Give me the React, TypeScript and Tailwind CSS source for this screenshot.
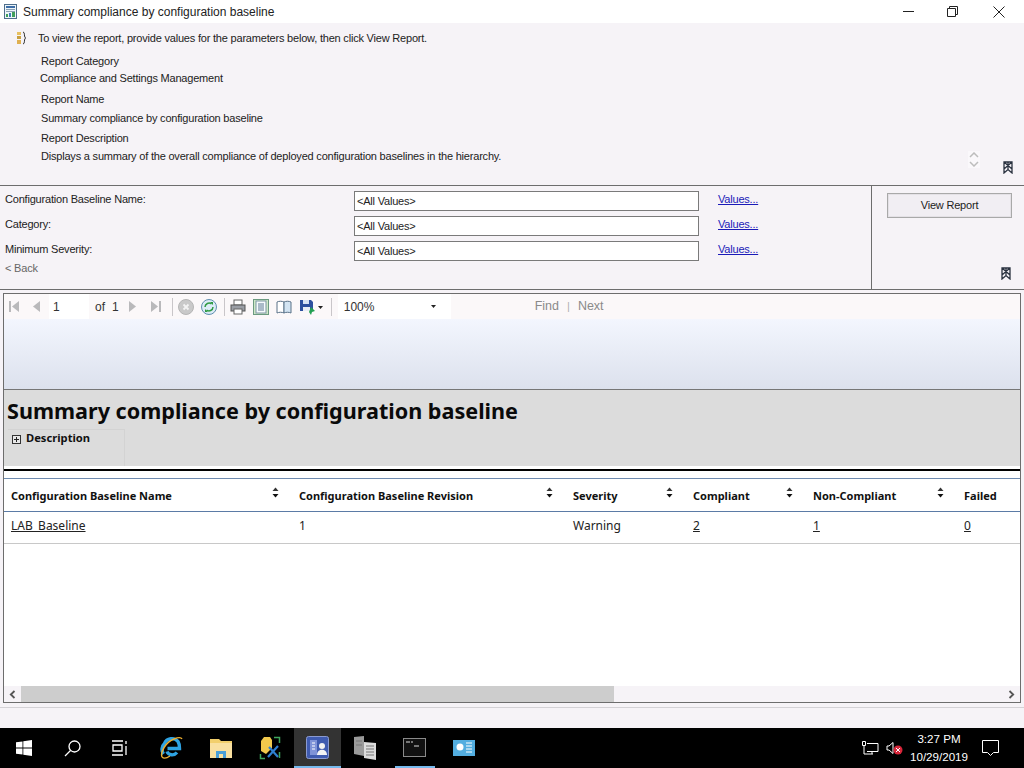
import type { ReactNode } from "react";

const INFO_ROWS = [
  { text: "Report Category", height: "h-[16px]", indent: "pl-[41px]" },
  { text: "Compliance and Settings Management", height: "h-[18px]", indent: "pl-[40px]" },
  { text: "Report Name", height: "h-[24px]", indent: "pl-[41px]" },
  { text: "Summary compliance by configuration baseline", height: "h-[14px]", indent: "pl-[41px]" },
  { text: "Report Description", height: "h-[26px]", indent: "pl-[41px]" },
  {
    text: "Displays a summary of the overall compliance of deployed configuration baselines in the hierarchy.",
    height: "h-[10px]",
    indent: "pl-[41px]",
  },
];

const PARAMS = ["Configuration Baseline Name:", "Category:", "Minimum Severity:"];

function PinIcon() {
  return (
    <svg width="12" height="13" viewBox="0 0 12 13" fill="none" stroke="#2a3240" strokeWidth="1.300">
      <path d="M2 1h8v11L6 8.500 2 12zM2 1l8 7M10 1 2 8M6 1v7.500" />
    </svg>
  );
}

function SortIcon() {
  return (
    <svg width="7" height="11" viewBox="0 0 7 11" className="mb-[9px] shrink-0">
      <path d="M3.500 0.500 6.500 4h-6z" fill="#333" />
      <path d="M0.500 7h6l-3 3.500z" fill="#111" />
    </svg>
  );
}

function NavIcon({ d }: { d: string }) {
  return (
    <svg width="12" height="13" viewBox="0 0 12 13" fill="#b9b9bb">
      <path d={d} />
    </svg>
  );
}

function ToolbarSep() {
  return <div className="h-[18px] w-px bg-[#c9c6c9]" />;
}

function HeaderCell({ children, sort = true }: { children: ReactNode; sort?: boolean }) {
  return (
    <div className="flex items-center justify-between pl-[7px] pr-[13px] pt-[3px] text-[11px] font-bold text-[#111]">
      <span className="whitespace-nowrap">{children}</span>
      {sort && <SortIcon />}
    </div>
  );
}

function TitleIcon() {
  return (
    <svg width="13" height="15" viewBox="0 0 13 15">
      <rect x="0.500" y="0.500" width="12" height="14" fill="#eef5f8" stroke="#4f6f8c" />
      <rect x="2" y="2" width="9" height="2" fill="#3d6ea8" />
      <path d="M2 5.500h9M2 7.500h9" stroke="#8aa0b5" />
      <rect x="2" y="10" width="2" height="3" fill="#3f9f5a" />
      <rect x="5" y="9" width="2" height="4" fill="#3d7fb8" />
      <rect x="8" y="8" width="3" height="5" fill="#3f9f5a" />
    </svg>
  );
}

function TaskbarSlot({
  children,
  width = "w-[49px]",
  active,
  marked,
}: {
  children: ReactNode;
  width?: string;
  active?: boolean;
  marked?: boolean;
}) {
  return (
    <div className={`flex h-[40px] flex-col items-center ${width} ${active ? "bg-[#333333]" : ""}`}>
      <div className="flex flex-1 items-center justify-center">{children}</div>
      {active && <div className="h-[2px] w-full bg-[#76b9ed]" />}
      {marked && <div className="h-[2px] w-[40px] bg-[#76b9ed]" />}
    </div>
  );
}

export default function App() {
  return (
    <div className="flex h-[768px] w-[1024px] flex-col overflow-hidden bg-[#f6f3f7] font-['Liberation_Sans',sans-serif] text-[12px] text-[#222]">
      {/* Title bar */}
      <div className="flex h-[23px] shrink-0 items-center bg-white">
        <div className="ml-[4px] mr-[6px] flex">
          <TitleIcon />
        </div>
        <span className="text-[12px] text-[#222]">Summary compliance by configuration baseline</span>
        <div className="ml-auto flex items-center">
          <svg width="12" height="12" viewBox="0 0 12 12" className="mr-[33px]" stroke="#222" fill="none">
            <path d="M1 5.500h11" />
          </svg>
          <svg width="11" height="11" viewBox="0 0 11 11" className="mr-[35px]" stroke="#222" fill="none">
            <path d="M0.500 2.500h8v8h-8zM2.500 2.500v-2h8v8h-2" />
          </svg>
          <svg width="12" height="12" viewBox="0 0 12 12" className="mr-[19px]" stroke="#222" fill="none">
            <path d="M0.500 0.500l11 11M11.500 0.500l-11 11" />
          </svg>
        </div>
      </div>

      {/* Report info */}
      <div className="relative h-[163px] shrink-0 border-b border-[#6d6d6d] text-[11px] leading-none tracking-[-0.2px]">
        <div className="flex h-[30px] items-center">
          <svg width="12" height="14" viewBox="0 0 12 14" className="ml-[16px] mr-[10px]">
            <rect x="1" y="1" width="4" height="3" fill="#e8c060" />
            <rect x="1" y="5" width="4" height="3" fill="#c9a040" />
            <rect x="1" y="9" width="4" height="4" fill="#e0b050" />
            <path d="M7 1c2 0 1 4 2 5.500 1 0.500 1 0.500 0 1C8 9 9 13 7 13" fill="none" stroke="#333" />
          </svg>
          <span>To view the report, provide values for the parameters below, then click View Report.</span>
        </div>
        {INFO_ROWS.map((row) => (
          <div key={row.text} className={`flex items-center whitespace-nowrap ${row.height} ${row.indent}`}>
            {row.text}
          </div>
        ))}
        <div className="absolute left-[968px] top-[128px] flex flex-col gap-[3px] bg-[#faf8fb] px-[1px] py-[1px]">
          <svg width="10" height="6" viewBox="0 0 10 6" fill="none" stroke="#bdbdbd" strokeWidth="1.500">
            <path d="M1 5l4-4 4 4" />
          </svg>
          <svg width="10" height="6" viewBox="0 0 10 6" fill="none" stroke="#bdbdbd" strokeWidth="1.500">
            <path d="M1 1l4 4 4-4" />
          </svg>
        </div>
        <div className="absolute left-[1002px] top-[138px]">
          <PinIcon />
        </div>
      </div>

      {/* Parameters */}
      <div className="flex h-[104px] shrink-0 border-b border-[#6d6d6d] text-[11px] leading-none tracking-[-0.2px]">
        <div className="w-[871px] pl-[5px] pt-[5px]">
          {PARAMS.map((label) => (
            <div key={label} className="flex h-[25px]">
              <div className="w-[349px] pt-[3px]">{label}</div>
              <div className="flex h-[20px] w-[345px] items-center border border-[#7a7a7a] bg-white pl-[2px]">
                &lt;All Values&gt;
              </div>
              <a className="ml-[19px] pt-[3px] text-[#1a1ab8] underline">Values...</a>
            </div>
          ))}
          <div className="-mt-[3px] text-[#666]">&lt; Back</div>
        </div>
        <div className="relative flex-1 border-l border-[#6d6d6d]">
          <button className="ml-[15px] mt-[7px] flex h-[25px] w-[125px] items-center justify-center border border-[#a9a9a9] bg-[#f1eef3] text-[#222] shadow-[inset_0_0_0_1px_#e4e1e6]">
            View Report
          </button>
          <div className="absolute left-[128px] top-[81px]">
            <PinIcon />
          </div>
        </div>
      </div>

      {/* Report frame */}
      <div className="ml-[3px] mt-[3px] flex h-[410px] w-[1018px] shrink-0 flex-col border border-[#6d6d6d] bg-white font-['Noto_Sans',sans-serif]">
        {/* Toolbar */}
        <div className="flex h-[25px] shrink-0 items-center bg-[#fbf8f9] font-['Liberation_Sans',sans-serif] text-[12px] text-[#333]">
          <div className="ml-[4px] flex">
            <NavIcon d="M1 1h2v11H1zM11 1v11L4 6.500z" />
          </div>
          <div className="ml-[10px] flex">
            <NavIcon d="M10 1v11L3 6.500z" />
          </div>
          <div className="ml-[7px] flex h-[25px] w-[40px] items-center bg-white pl-[4px]">1</div>
          <span className="ml-[5px] pl-px">of</span>
          <span className="ml-[7px]">1</span>
          <div className="ml-[8px] flex">
            <NavIcon d="M2 1v11l7-5.500z" />
          </div>
          <div className="ml-[11px] flex">
            <NavIcon d="M1 1v11l7-5.500zM9 1h2v11H9z" />
          </div>
          <div className="ml-[10px]">
            <ToolbarSep />
          </div>
          <svg width="16" height="16" viewBox="0 0 16 16" className="ml-[5px]">
            <circle cx="8" cy="8" r="7.500" fill="#c9c9c9" stroke="#b5b5b5" />
            <path d="M5.500 5.500l5 5M10.500 5.500l-5 5" stroke="#f3f3f3" strokeWidth="1.800" />
          </svg>
          <svg width="16" height="16" viewBox="0 0 16 16" className="ml-[7px]">
            <circle cx="8" cy="8" r="7.500" fill="#dcecf7" stroke="#5f8fae" />
            <path d="M4 8a4 4 0 0 1 6.500-3M12 8a4 4 0 0 1-6.500 3" fill="none" stroke="#2f9a42" strokeWidth="1.500" />
            <path d="M9 3h3v3zM7 13H4v-3z" fill="#2f9a42" />
          </svg>
          <div className="ml-[7px]">
            <ToolbarSep />
          </div>
          <svg width="16" height="16" viewBox="0 0 16 16" className="ml-[5px]">
            <rect x="4" y="1" width="8" height="5" fill="#fff" stroke="#666" />
            <rect x="1" y="6" width="14" height="6" fill="#9a9ea5" stroke="#555" />
            <rect x="4" y="10" width="8" height="5" fill="#fff" stroke="#666" />
          </svg>
          <svg width="16" height="16" viewBox="0 0 16 16" className="ml-[7px]">
            <rect x="0.500" y="0.500" width="15" height="15" fill="#cfe8c6" stroke="#6b9a80" />
            <rect x="3" y="2" width="10" height="12" fill="#f6fafc" stroke="#7c95a3" />
            <path d="M5 5h6M5 7h6M5 9h6M5 11h6" stroke="#5f7a94" />
          </svg>
          <svg width="16" height="16" viewBox="0 0 16 16" className="ml-[7px]">
            <path d="M1 3c2-1 5-1 7 0v11c-2-1-5-1-7 0z" fill="#fff" stroke="#5a7288" />
            <path d="M8 3c2-1 5-1 7 0v11c-2-1-5-1-7 0z" fill="#d3e4f2" stroke="#5a7288" />
          </svg>
          <svg width="17" height="16" viewBox="0 0 17 16" className="ml-[7px]">
            <path d="M1 1h11l2 2v9H1z" fill="#2c4f9e" />
            <rect x="4" y="1" width="6" height="4" fill="#d7e2f4" />
            <rect x="4" y="8" width="7" height="4" fill="#e8edf6" />
            <path d="M12 8l4 4-3 1-1 3-2-3z" fill="#22a052" />
          </svg>
          <svg width="5" height="3" viewBox="0 0 5 3" className="ml-[2px] mt-[2px]">
            <path d="M0 0h5L2.500 3z" fill="#222" />
          </svg>
          <div className="ml-[8px]">
            <ToolbarSep />
          </div>
          <div className="ml-[6px] flex h-[25px] w-[113px] items-center justify-between bg-white pl-[6px] pr-[15px]">
            <span>100%</span>
            <svg width="5" height="3" viewBox="0 0 5 3">
              <path d="M0 0h5L2.500 3z" fill="#222" />
            </svg>
          </div>
          <span className="ml-[84px] text-[12.500px] text-[#8a8a8a]">Find</span>
          <span className="ml-[8px] text-[11px] text-[#b0b0b0]">|</span>
          <span className="ml-[8px] text-[12.500px] text-[#8a8a8a]">Next</span>
        </div>

        {/* Report header */}
        <div className="h-[71px] shrink-0 border-b border-[#767676] bg-gradient-to-b from-[#f3f6fe] to-[#dce1ed]" />
        <div className="h-[76px] shrink-0 bg-[#dcdcdc] pl-[3px]">
          <div className="whitespace-nowrap pt-[6px] text-[21.600px] font-bold leading-[30px] text-[#0a0a0a]">
            Summary compliance by configuration baseline
          </div>
          <div className="ml-[1px] mt-[3px] flex h-[37px] w-[117px] border-r border-t border-[#d3d3d3] pl-[3px]">
            <svg width="11" height="11" viewBox="0 0 11 11" className="mt-[4px]">
              <rect x="1.500" y="1.500" width="8" height="8" fill="#e8e8e8" stroke="#333" />
              <path d="M3 5.500h5M5.500 3v5" stroke="#222" />
            </svg>
            <span className="ml-[4px] text-[11.200px] font-bold leading-[16px] text-[#111]">Description</span>
          </div>
        </div>

        {/* Table */}
        <div className="h-[3px] shrink-0" />
        <div className="h-[2px] shrink-0 bg-black" />
        <div className="h-[7px] shrink-0" />
        <div className="grid h-[34px] shrink-0 grid-cols-[288px_274px_120px_120px_151px_1fr] border-y border-t-[#6f8bb0] border-b-[#5b7ba6]">
          <HeaderCell>Configuration Baseline Name</HeaderCell>
          <HeaderCell>Configuration Baseline Revision</HeaderCell>
          <HeaderCell>Severity</HeaderCell>
          <HeaderCell>Compliant</HeaderCell>
          <HeaderCell>Non-Compliant</HeaderCell>
          <HeaderCell sort={false}>Failed</HeaderCell>
        </div>
        <div className="grid h-[32px] shrink-0 grid-cols-[288px_274px_120px_120px_151px_1fr] items-center border-b border-[#c8c8c8] pb-[4px] text-[12px] text-[#222]">
          <a className="pl-[7px] underline">LAB_Baseline</a>
          <span className="pl-[7px]">1</span>
          <span className="pl-[7px]">Warning</span>
          <a className="pl-[7px] underline">2</a>
          <a className="pl-[7px] underline">1</a>
          <a className="pl-[7px] underline">0</a>
        </div>
        <div className="flex-1" />

        {/* Scrollbar */}
        <div className="flex h-[16px] shrink-0 items-center bg-[#f6f3f7]">
          <div className="flex w-[17px] justify-center">
            <svg width="7" height="9" viewBox="0 0 7 9" fill="none" stroke="#555" strokeWidth="1.800">
              <path d="M5.500 1 1.800 4.500 5.500 8" />
            </svg>
          </div>
          <div className="h-[16px] w-[593px] bg-[#cdcdcd]" />
          <div className="ml-auto flex w-[17px] justify-center">
            <svg width="7" height="9" viewBox="0 0 7 9" fill="none" stroke="#555" strokeWidth="1.800">
              <path d="M1.500 1 5.200 4.500 1.500 8" />
            </svg>
          </div>
        </div>
      </div>

      <div className="mt-[4px] h-px shrink-0 bg-[#d4d2d6]" />
      <div className="flex-1" />

      {/* Taskbar */}
      <div className="flex h-[40px] shrink-0 items-center bg-black text-white">
        <div className="flex h-[40px] w-[48px] items-center justify-center">
          <svg width="16" height="16" viewBox="0 0 16 16" fill="#fff">
            <path d="M0 2.300 6.500 1.400v6.200H0zM7.300 1.300 16 0v7.600H7.300zM0 8.400h6.500v6.200L0 13.700zM7.300 8.400H16V16l-8.700-1.300z" />
          </svg>
        </div>
        <div className="flex h-[40px] w-[48px] items-center justify-center">
          <svg width="17" height="17" viewBox="0 0 17 17" fill="none" stroke="#fff" strokeWidth="1.300">
            <circle cx="10.500" cy="6.500" r="5.500" />
            <path d="M6.500 10.500 1 16" />
          </svg>
        </div>
        <div className="flex h-[40px] w-[48px] items-center justify-center">
          <svg width="16" height="16" viewBox="0 0 16 16" fill="none" stroke="#fff" strokeWidth="1.300">
            <path d="M0 1h11M0 15h11M1 5h9v6H1zM14 1v3M14 6v9" />
          </svg>
        </div>
        <div className="w-[3px]" />
        <TaskbarSlot>
          <svg width="23" height="24" viewBox="0 0 23 24" fill="none" className="mr-[1px]">
            <path d="M3.500 18a8 8 0 0 1 1-10.500A8 8 0 0 1 18 5.500c1 1.500 1.500 3.500 1.500 7H7.500" stroke="#2ea3e3" strokeWidth="3.400" />
            <path d="M7 15.500c1.500 4 7 4.500 10 1" stroke="#2ea3e3" strokeWidth="3.400" />
            <path d="M2 21C0 16 6 6 14 3c3-1.200 7-2 8 0" stroke="#f0b030" strokeWidth="1.400" />
            <path d="M2 21c2 2 5 1 8-1" stroke="#f0b030" strokeWidth="1.200" />
          </svg>
        </TaskbarSlot>
        <TaskbarSlot>
          <svg width="22" height="19" viewBox="0 0 22 19">
            <path d="M0 0h9l2 2h11v17H0z" fill="#f2cf6c" />
            <rect x="0" y="4" width="22" height="15" fill="#f9e0a0" />
            <rect x="6" y="12" width="10" height="7" fill="#4a9fd8" />
            <rect x="9" y="15" width="4" height="4" fill="#f9e0a0" />
          </svg>
        </TaskbarSlot>
        <TaskbarSlot>
          <svg width="22" height="24" viewBox="0 0 22 24" fill="none">
            <path d="M5 1h6l2 3v8l-6 6-5-3V5z" fill="#f2c94c" />
            <path d="M15 1.500h5.500V7M1.500 18v4.500H6M20.500 16v6" stroke="#3fa55b" strokeWidth="1.500" />
            <path d="M9 21 19 10M10 11l9 10" stroke="#2f7fd0" strokeWidth="2.200" />
          </svg>
        </TaskbarSlot>
        <TaskbarSlot width="w-[47px]" active>
          <svg width="23" height="23" viewBox="0 0 23 23">
            <rect x="0.500" y="0.500" width="22" height="22" rx="2" fill="#3f5bb0" stroke="#8a9ad0" />
            <rect x="4" y="4" width="7" height="15" fill="#7f93d8" />
            <path d="M6 7h3M6 10h3M6 13h3" stroke="#fff" />
            <circle cx="16" cy="10" r="3" fill="#f3f3f3" />
            <path d="M11 19c0-7 10-7 10 0z" fill="#f3f3f3" />
          </svg>
        </TaskbarSlot>
        <TaskbarSlot>
          <svg width="23" height="24" viewBox="0 0 23 24">
            <path d="M0 1l10-1v20l-10-2z" fill="#9a9a9a" />
            <path d="M10 6l12 1v17l-12-2z" fill="#dcdcdc" />
            <path d="M12 10h8M12 13h8M12 16h8M12 19h8M2 5h6M2 9h6" stroke="#777" />
          </svg>
        </TaskbarSlot>
        <TaskbarSlot marked>
          <div className="flex h-[19px] w-[23px] border border-[#8a8a8a] bg-[#111] pl-[2px] pt-[2px]">
            <svg width="17" height="6" viewBox="0 0 17 6" stroke="#ddd" fill="none">
              <path d="M0 1h4M5 1h2M8 5h5" />
            </svg>
          </div>
        </TaskbarSlot>
        <TaskbarSlot>
          <svg width="22" height="16" viewBox="0 0 22 16">
            <rect width="22" height="16" fill="#53aee0" />
            <circle cx="7" cy="7" r="3.500" fill="#fff" />
            <path d="M13 3h6M13 6h6M13 9h6M13 12h6" stroke="#fff" />
          </svg>
        </TaskbarSlot>

        <div className="ml-auto flex items-center">
          <svg width="17" height="14" viewBox="0 0 17 14" fill="none" stroke="#fff" className="mr-[7px]">
            <path d="M5 2.500h11v8H5M3.500 0.500h-3v4h3zM2 4.500V13h9M10 10.500V13" />
          </svg>
          <svg width="17" height="14" viewBox="0 0 17 14" fill="none" className="mr-[7px]">
            <path d="M1 5h2l4-3.500v11L3 9H1z" stroke="#fff" />
            <circle cx="12" cy="9" r="4.500" fill="#d9263a" />
            <path d="M10 7l4 4M14 7l-4 4" stroke="#fff" />
          </svg>
          <div className="mr-[14px] flex w-[58px] flex-col items-center text-[11.600px] leading-[18px] text-white">
            <span>3:27 PM</span>
            <span>10/29/2019</span>
          </div>
          <svg width="18" height="17" viewBox="0 0 18 17" fill="none" stroke="#fff" className="mr-[24px]">
            <path d="M0.500 0.500h16v12h-5l-3 3-3-3h-5z" />
          </svg>
        </div>
      </div>
    </div>
  );
}
